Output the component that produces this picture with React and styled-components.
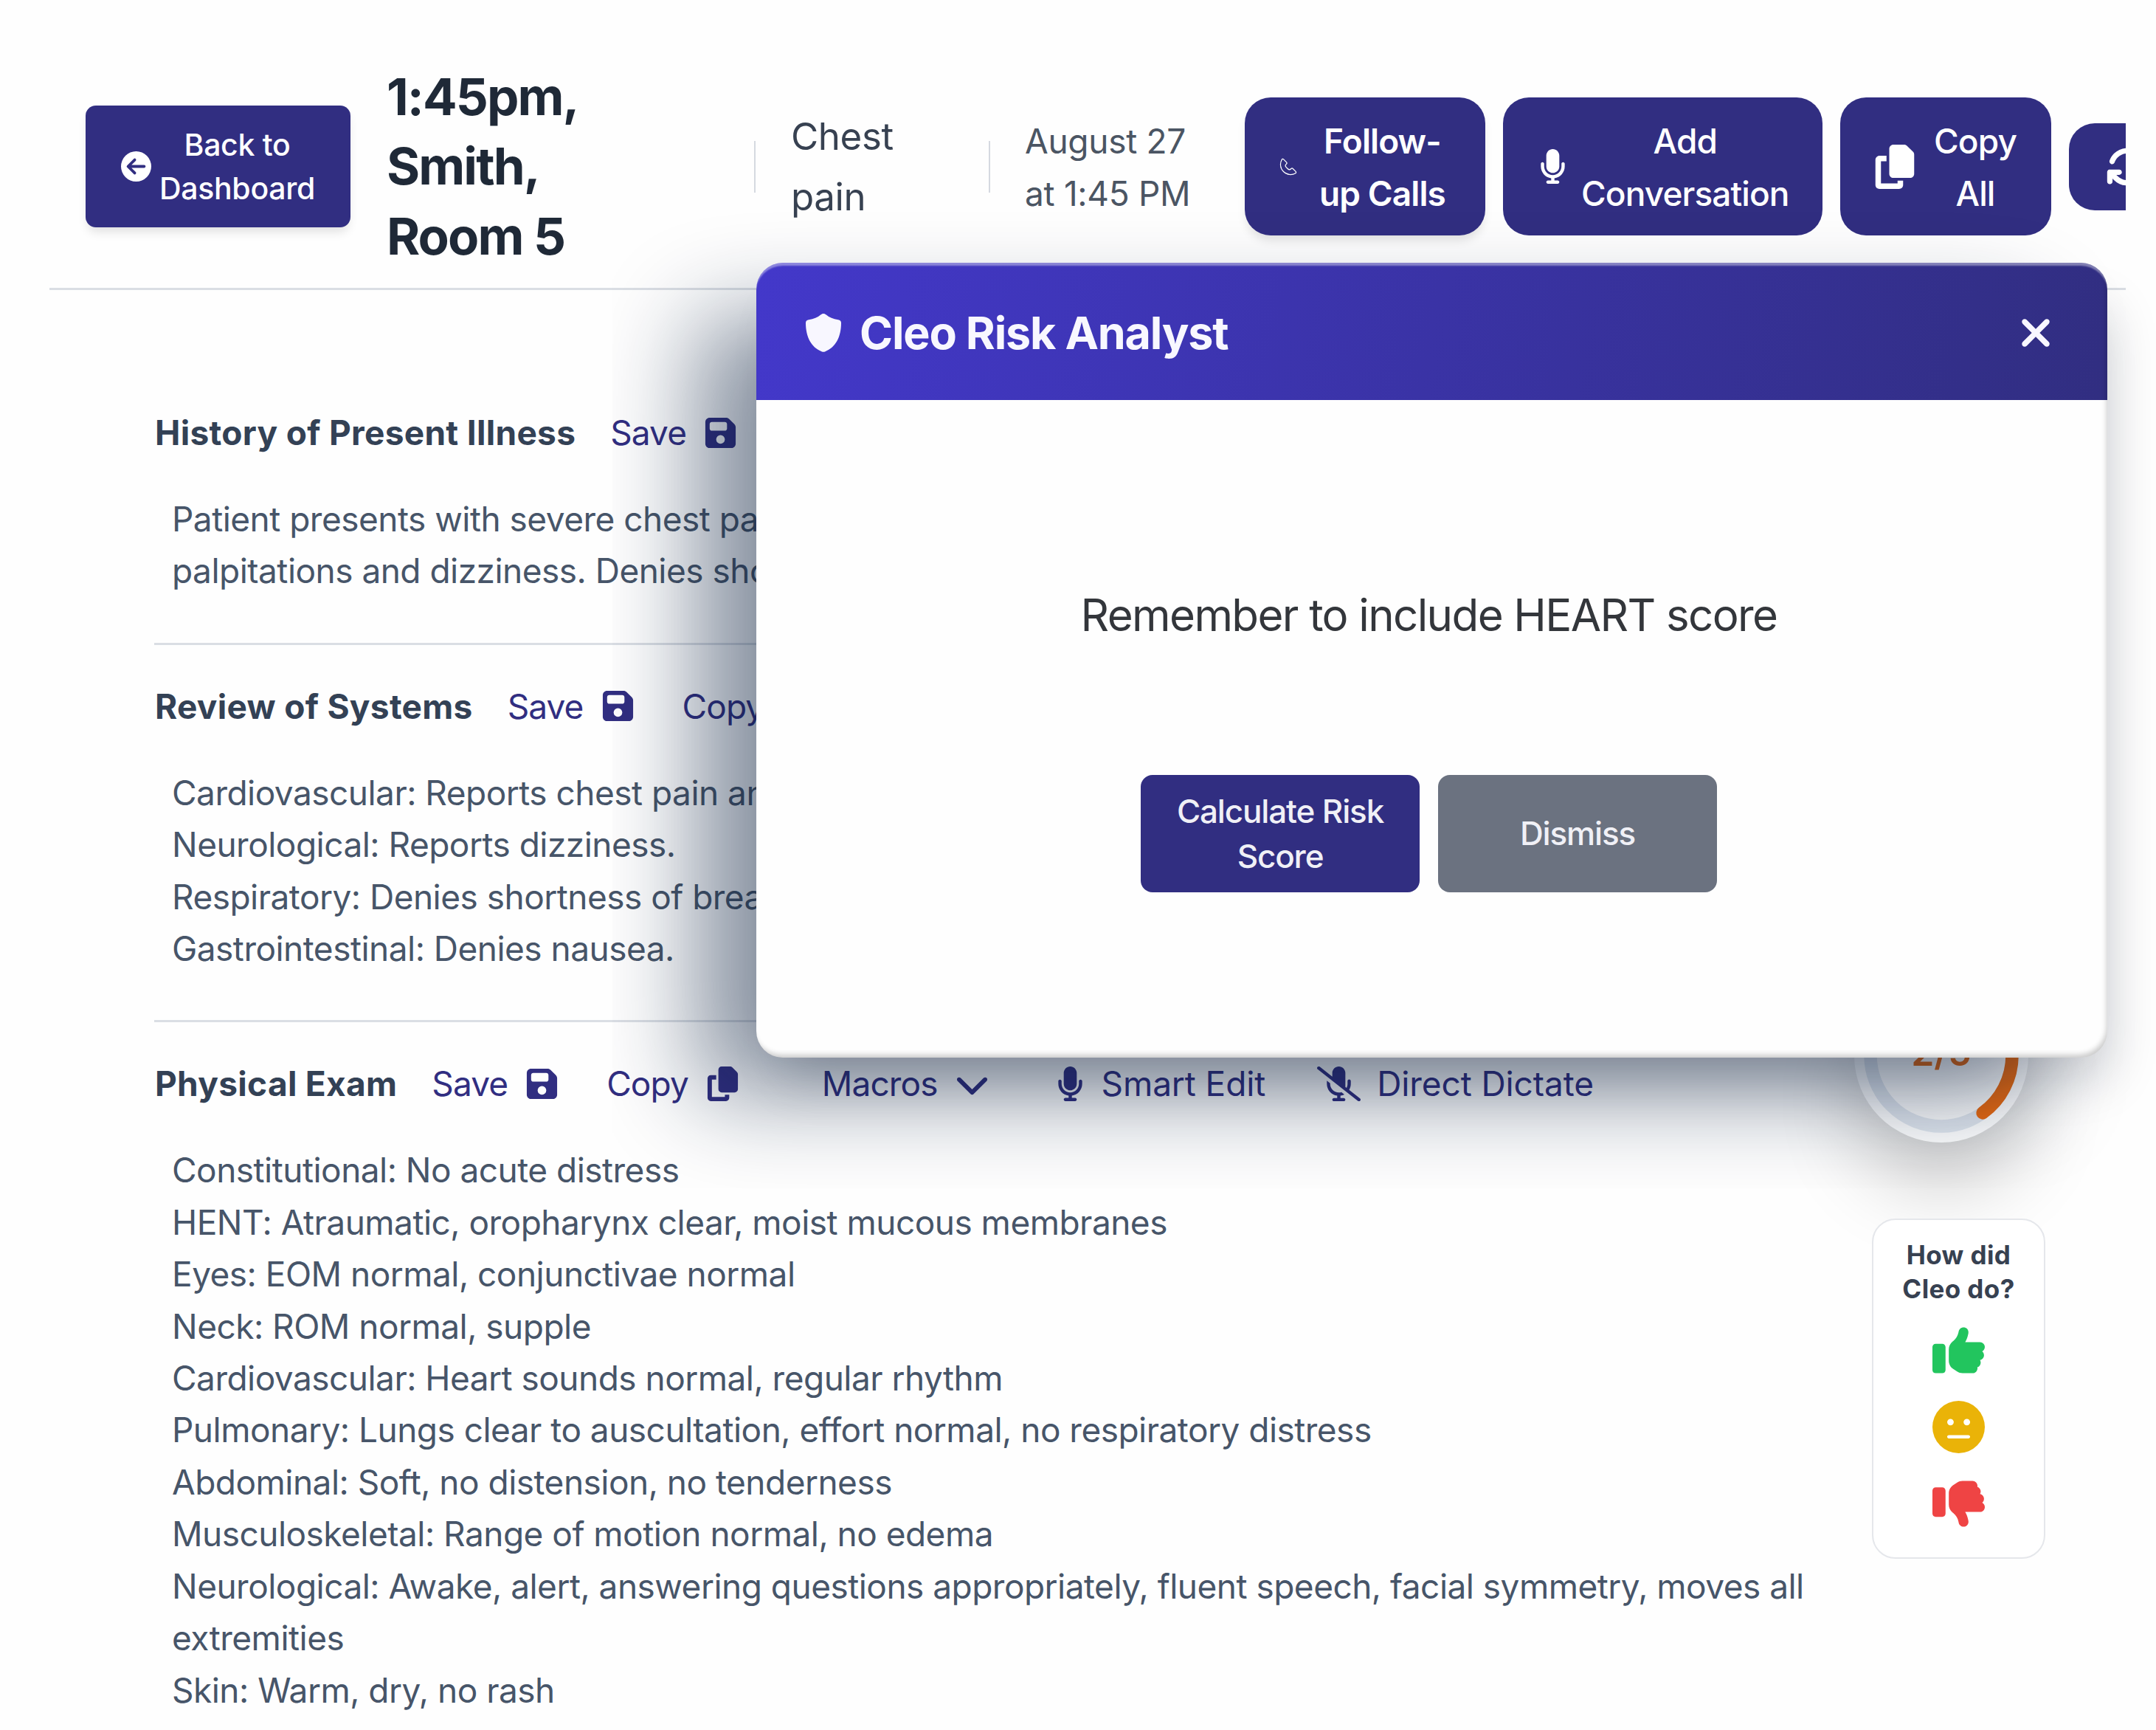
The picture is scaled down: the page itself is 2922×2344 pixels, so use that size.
import styled, { createGlobalStyle } from "styled-components";
import {
  FaCircleArrowLeft,
  FaMicrophone,
  FaMicrophoneSlash,
  FaCopy,
  FaArrowsRotate,
  FaFloppyDisk,
  FaChevronDown,
  FaXmark,
  FaThumbsUp,
  FaThumbsDown,
  FaFaceMeh,
} from "react-icons/fa6";
import { CiPhone } from "react-icons/ci";

const HPI = [
  "Patient presents with severe chest pain radiating to the left arm, associated with",
  "palpitations and dizziness. Denies shortness of breath or nausea.",
];

const ROS = [
  "Cardiovascular: Reports chest pain and palpitations.",
  "Neurological: Reports dizziness.",
  "Respiratory: Denies shortness of breath.",
  "Gastrointestinal: Denies nausea.",
];

const EXAM = [
  "Constitutional: No acute distress",
  "HENT: Atraumatic, oropharynx clear, moist mucous membranes",
  "Eyes: EOM normal, conjunctivae normal",
  "Neck: ROM normal, supple",
  "Cardiovascular: Heart sounds normal, regular rhythm",
  "Pulmonary: Lungs clear to auscultation, effort normal, no respiratory distress",
  "Abdominal: Soft, no distension, no tenderness",
  "Musculoskeletal: Range of motion normal, no edema",
  "Neurological: Awake, alert, answering questions appropriately, fluent speech, facial symmetry, moves all",
  "extremities",
  "Skin: Warm, dry, no rash",
];

const Section = ({ title, lines, full }) => (
  <SectionBox>
    <SectionHeader>
      <SectionTitle>{title}</SectionTitle>
      <Action>
        Save
        <FaFloppyDisk size={47} />
      </Action>
      <Action>
        Copy
        <FaCopy size={47} />
      </Action>
      {full && (
        <>
          <Action $ml={47} $gap={23}>
            Macros
            <FaChevronDown size={47} />
          </Action>
          <Action $ml={22} $gap={19} $wide>
            <FaMicrophone size={47} />
            Smart Edit
          </Action>
          <Action $ml={6} $gap={22} $wide>
            <FaMicrophoneSlash size={59} />
            Direct Dictate
          </Action>
        </>
      )}
    </SectionHeader>
    <Note>
      {lines.map((line) => (
        <p key={line}>{line}</p>
      ))}
    </Note>
  </SectionBox>
);

const RiskModal = () => (
  <ShadowFrame>
    <Modal>
      <ModalHeader>
        <svg width="48" height="52" viewBox="0 0 48 52">
          <path
            d="M24 0c1.500 0 2.600.6 3.800 1.600C32 5 37 7.600 44 8.300c2.400.3 4 1.800 4 4.200C48 32 40 46 26.500 51.200c-1.700.7-3.300.7-5 0C8 46 0 32 0 12.500c0-2.400 1.600-3.900 4-4.200C11 7.600 16 5 20.200 1.600 21.400.6 22.500 0 24 0z"
            fill="currentColor"
          />
        </svg>
        <ModalTitle>Cleo Risk Analyst</ModalTitle>
        <FaXmark size={60} />
      </ModalHeader>
      <ModalBody>
        <Message>Remember to include HEART score</Message>
        <ModalActions>
          <ModalButton>
            Calculate Risk
            <br />
            Score
          </ModalButton>
          <ModalButton $muted>Dismiss</ModalButton>
        </ModalActions>
      </ModalBody>
    </Modal>
  </ShadowFrame>
);

const App = () => {
  return (
    <Page>
      <GlobalStyle />
      <Content>
        <Header>
          <BackButton>
            <FaCircleArrowLeft size={41} />
            <span>
              Back to
              <br />
              Dashboard
            </span>
          </BackButton>
          <PatientName>
            1:45pm,
            <br />
            Smith,
            <br />
            Room 5
          </PatientName>
          <Divider />
          <Complaint>
            Chest
            <br />
            pain
          </Complaint>
          <Divider />
          <Visit>
            August 27
            <br />
            at 1:45 PM
          </Visit>
          <Toolbar>
            <ToolButton $w={326} $bold $gap={27}>
              <CiPhone size={30} />
              <span>
                Follow-
                <br />
                up Calls
              </span>
            </ToolButton>
            <ToolButton $w={433} $gap={15}>
              <FaMicrophone size={47} />
              <span>
                Add
                <br />
                Conversation
              </span>
            </ToolButton>
            <ToolButton $w={286} $gap={23}>
              <FaCopy size={60} />
              <span>
                Copy
                <br />
                All
              </span>
            </ToolButton>
            <ToolButton $w={260} $h={118} $gap={24} $pad={50}>
              <FaArrowsRotate size={58} />
            </ToolButton>
          </Toolbar>
        </Header>
        <Sections>
          <Section title="History of Present Illness" lines={HPI} />
          <Section title="Review of Systems" lines={ROS} />
          <Section title="Physical Exam" lines={EXAM} full />
        </Sections>
      </Content>

      <ScoreRing>
        <svg width="236" height="236" viewBox="0 0 236 236">
          <circle cx="118" cy="118" r="96" fill="none" stroke="#e2e8f0" strokeWidth="17.500" />
          <circle
            cx="118"
            cy="118"
            r="96"
            fill="none"
            stroke="#ea6a10"
            strokeWidth="17.500"
            strokeLinecap="round"
            strokeDasharray="241.300 603.200"
            transform="rotate(-90 118 118)"
          />
        </svg>
        <Score>2/5</Score>
      </ScoreRing>

      <Feedback>
        <FeedbackTitle>
          How did
          <br />
          Cleo do?
        </FeedbackTitle>
        <FaThumbsUp size={71} color="#22c55e" />
        <FaFaceMeh size={71} color="#eab308" />
        <FaThumbsDown size={71} color="#ef4444" />
      </Feedback>

      <RiskModal />
    </Page>
  );
};

// Styles
const GlobalStyle = createGlobalStyle`
  * {
    box-sizing: border-box;
  }

  body {
    margin: 0;
    background: #fefefe;
    font-family: Inter, "Liberation Sans", sans-serif;
  }

  p, h1, h2, h3 {
    margin: 0;
  }

  svg {
    flex: none;
  }
`;

const Page = styled.div`
  position: relative;
  width: 2922px;
  height: 2344px;
  overflow: hidden;
  background: #fefefe;
`;

const Content = styled.div`
  width: 2814px;
  margin-left: 67px;
  overflow: hidden;
`;

const Header = styled.header`
  display: flex;
  align-items: center;
  height: 393px;
  padding: 61px 0 0 49px;
  border-bottom: 3px solid #dadee4;
  white-space: nowrap;

  & > * {
    flex: none;
  }
`;

const BackButton = styled.button`
  display: flex;
  align-items: center;
  justify-content: center;
  gap: 11px;
  width: 359px;
  height: 165px;
  margin-right: 49px;
  border: 0;
  border-radius: 14px;
  background: #312e81;
  color: #fff;
  font: 500 41px/58.6px Inter, sans-serif;
  letter-spacing: -0.3px;
  box-shadow: 0 9px 14px -3px rgb(0 0 0 / 0.12);
`;

const PatientName = styled.h1`
  width: 498px;
  font-size: 69px;
  font-weight: 700;
  line-height: 94.6px;
  letter-spacing: -1.9px;
  color: #1f2937;
`;

const Divider = styled.div`
  width: 2px;
  height: 70px;
  background: #d5d9e0;
`;

const Complaint = styled.div`
  width: 268px;
  margin-left: 48px;
  font-size: 51px;
  line-height: 82px;
  letter-spacing: -0.4px;
  color: #374151;
`;

const Visit = styled.div`
  width: 298px;
  margin-left: 47px;
  padding-top: 2px;
  font-size: 46px;
  line-height: 70.4px;
  letter-spacing: -0.3px;
  color: #4b5563;
`;

const Toolbar = styled.div`
  display: flex;
  align-items: center;
  gap: 24px;
`;

const ToolButton = styled.button`
  display: flex;
  align-items: center;
  flex: none;
  gap: ${(props) => props.$gap}px;
  width: ${(props) => props.$w}px;
  height: ${(props) => props.$h || 187}px;
  padding: 0 0 0 ${(props) => props.$pad || 44}px;
  border: 0;
  border-radius: 35px;
  background: #312e81;
  color: #fff;
  font: ${(props) => (props.$bold ? 600 : 500)} 46px/70.4px Inter, sans-serif;
  letter-spacing: -0.9px;
  box-shadow: ${(props) => (props.$bold ? "0 9px 14px -3px rgb(0 0 0 / 0.12)" : "none")};

  span {
    padding-top: 2px;
  }
`;

const Sections = styled.main`
  padding: 157px 160px 0 142px;
`;

const SectionBox = styled.section`
  padding-bottom: 62px;

  & + & {
    padding-top: 47px;
    border-top: 3px solid #dadee4;
  }
`;

const SectionHeader = styled.div`
  display: flex;
  align-items: center;
  gap: 47px;
  height: 72px;
  white-space: nowrap;
`;

const SectionTitle = styled.h2`
  margin-left: 1px;
  font-size: 46px;
  font-weight: 700;
  letter-spacing: 0.3px;
  color: #334155;
`;

const Action = styled.span`
  display: flex;
  align-items: center;
  gap: ${(props) => props.$gap || 23}px;
  margin-left: ${(props) => props.$ml || 0}px;
  margin-right: 17px;
  font-size: 46px;
  letter-spacing: ${(props) => (props.$wide ? "-0.1px" : "-0.9px")};
  color: #312e81;
`;

const Note = styled.div`
  padding: 46px 0 0 24px;
  font-size: 46px;
  line-height: 70.4px;
  letter-spacing: -0.52px;
  color: #475569;
  white-space: nowrap;
`;

const ScoreRing = styled.div`
  position: absolute;
  left: 2513px;
  top: 1312px;
  display: grid;
  place-items: center;
  width: 236px;
  height: 236px;
  border-radius: 50%;
  background: #fff;
  box-shadow: 0 60px 110px rgb(0 0 0 / 0.2);

  & > * {
    grid-area: 1 / 1;
  }
`;

const Score = styled.span`
  padding-bottom: 8px;
  font-size: 50px;
  font-weight: 600;
  color: #ea6a10;
`;

const Feedback = styled.aside`
  position: absolute;
  left: 2537px;
  top: 1651px;
  display: flex;
  flex-direction: column;
  align-items: center;
  gap: 33px;
  width: 235px;
  height: 461px;
  padding-top: 24px;
  border: 2px solid #e5e7eb;
  border-radius: 32px;
  background: #fff;
`;

const FeedbackTitle = styled.h3`
  margin-bottom: -8px;
  font-size: 35px;
  font-weight: 700;
  line-height: 46px;
  letter-spacing: 0.4px;
  text-align: center;
  color: #374151;
`;

// Keeps the modal's soft shadow inside its own frame
const ShadowFrame = styled.div`
  position: absolute;
  left: 830px;
  top: 286px;
  width: 2092px;
  height: 1324px;
  padding: 70px 66px 177px 195px;
  overflow: hidden;
`;

const Modal = styled.div`
  position: relative;
  height: 1077px;
  border-radius: 36px;
  background: #fefefe;
  box-shadow:
    -93px 62px 130px -12px rgb(8 30 60 / 0.48),
    20px 45px 70px -20px rgb(10 20 40 / 0.2);
  display: flex;
  flex-direction: column;

  &::after {
    content: "";
    position: absolute;
    inset: 0;
    border-radius: 36px;
    box-shadow: inset -3px -6px 7px -2px rgb(0 0 0 / 0.2);
  }
`;

const ModalHeader = styled.div`
  display: flex;
  align-items: center;
  height: 186px;
  padding: 4px 67px 0;
  border-radius: 36px 36px 0 0;
  background: linear-gradient(100deg, #4338ca, #312e81);
  box-shadow: inset 0 5px 2px -1px rgb(255 255 255 / 0.4);
  color: #f8f7ff;
`;

const ModalTitle = styled.h2`
  flex: 1;
  margin-left: 25px;
  font-size: 61px;
  font-weight: 700;
  letter-spacing: -1.2px;
`;

const ModalBody = styled.div`
  display: flex;
  flex-direction: column;
  align-items: center;
  padding: 249px 8px 0 0;
`;

const Message = styled.p`
  font-size: 60px;
  line-height: 84px;
  letter-spacing: -1.6px;
  color: #33363b;
  white-space: nowrap;
`;

const ModalActions = styled.div`
  display: flex;
  gap: 25px;
  margin-top: 175px;
`;

const ModalButton = styled.button`
  width: 378px;
  height: 159px;
  padding: 0;
  border: 0;
  border-radius: 16px;
  background: ${(props) => (props.$muted ? "#6b7280" : "#312e81")};
  color: #f0f0f6;
  font: 500 44px/61px Inter, sans-serif;
  letter-spacing: -1.15px;
`;

export default App;
